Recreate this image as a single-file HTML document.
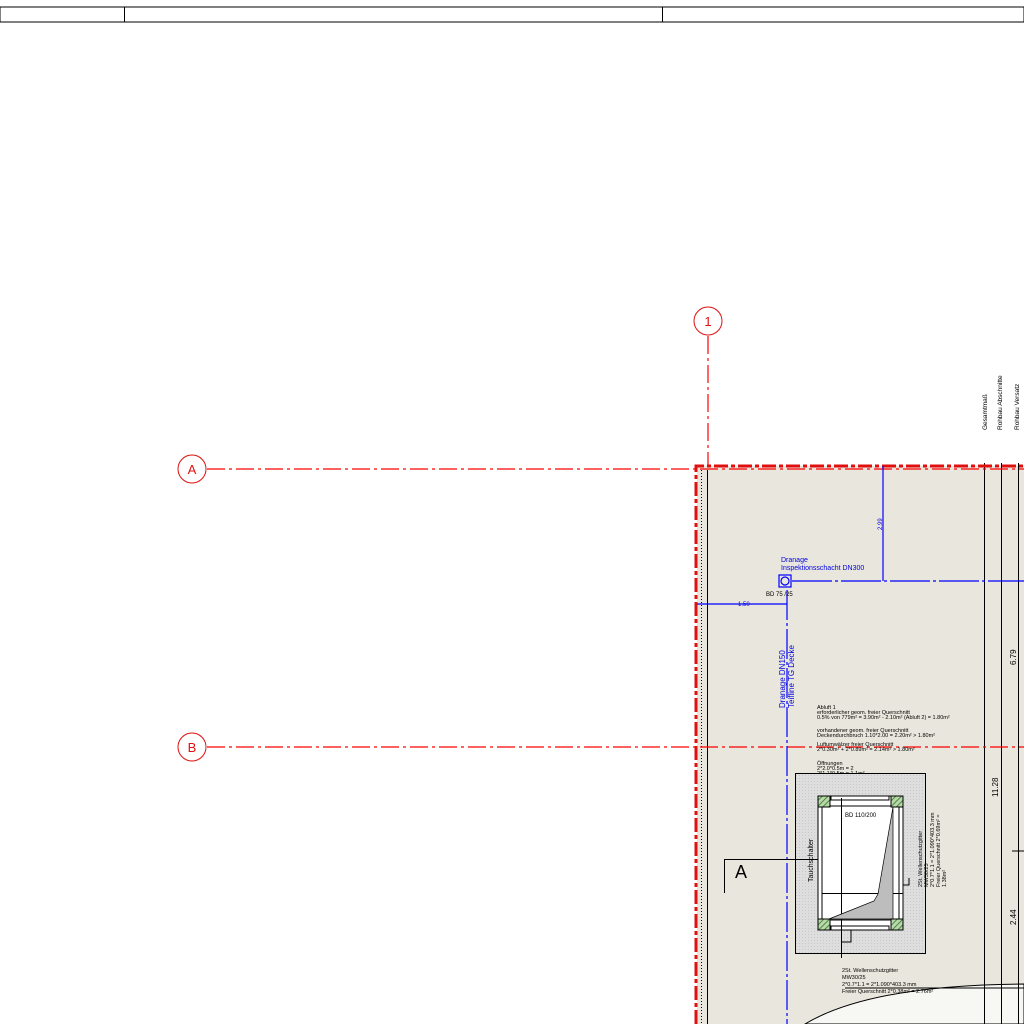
<!DOCTYPE html>
<html><head><meta charset="utf-8"><style>
html,body{margin:0;padding:0;background:#fff;width:1024px;height:1024px;overflow:hidden}
svg{display:block}
text{font-family:"Liberation Sans",sans-serif}
.r{stroke:#ff0000;stroke-width:1.2;stroke-dasharray:18,4,3,4;fill:none}
.b{stroke:#0000ff;stroke-width:1.2;fill:none}
</style></head><body>
<svg width="1024" height="1024" viewBox="0 0 1024 1024" xmlns="http://www.w3.org/2000/svg">
<defs>
<pattern id="h" width="4" height="4" patternUnits="userSpaceOnUse" patternTransform="rotate(45)">
<rect width="4" height="4" fill="#b8d8a8"/><line x1="0" y1="0" x2="0" y2="4" stroke="#2a6a2a" stroke-width="1.5"/></pattern>
<pattern id="g" width="3" height="3" patternUnits="userSpaceOnUse"><rect width="3" height="3" fill="#dedede"/><rect x="1" y="1" width="1" height="1" fill="#c8c8c8"/></pattern>
</defs>
<rect x="0" y="7" width="1024" height="15" fill="#fff" stroke="#000" stroke-width="1"/>
<line x1="124.5" y1="7" x2="124.5" y2="22" stroke="#000"/>
<line x1="662.5" y1="7" x2="662.5" y2="22" stroke="#000"/>
<rect x="697" y="466" width="327" height="558" fill="#e9e7dd"/>
<path d="M805 1024 Q870 985 1024 984 L1024 1024 Z" fill="#f7f7f4" stroke="#000" stroke-width="1"/>
<g stroke="#000" stroke-width="1">
<line x1="984.5" y1="463" x2="984.5" y2="1024"/>
<line x1="1001.5" y1="463" x2="1001.5" y2="1024"/>
<line x1="1018.5" y1="463" x2="1018.5" y2="1024"/>
<line x1="1012" y1="851" x2="1024" y2="851"/>
<line x1="845" y1="988" x2="1024" y2="988"/>
<line x1="707.5" y1="470" x2="707.5" y2="1024"/>
</g>
<line x1="701.5" y1="470" x2="701.5" y2="1024" stroke="#000" stroke-dasharray="1,2"/>
<path d="M696 1024 V466 H1024" fill="none" stroke="#e01010" stroke-width="3" stroke-dasharray="14,3,4,3"/>
<line class="r" x1="207" y1="469" x2="1024" y2="469"/>
<line class="r" x1="207" y1="747" x2="1024" y2="747"/>
<line class="r" x1="708" y1="336" x2="708" y2="466"/>
<g stroke="#e01010" fill="#fff">
<circle cx="192" cy="469" r="14"/><circle cx="192" cy="747" r="14"/><circle cx="708" cy="321" r="14"/>
</g>
<g fill="#e01010" font-size="13" text-anchor="middle">
<text x="192" y="474">A</text><text x="192" y="752">B</text><text x="708" y="326">1</text>
</g>
<line class="b" x1="787" y1="590" x2="787" y2="1024" stroke-dasharray="30,3,3,3"/>
<line class="b" x1="792" y1="581" x2="1024" y2="581" stroke-dasharray="40,3,3,3"/>
<line class="b" x1="883" y1="466" x2="883" y2="581"/>
<line class="b" x1="697" y1="604" x2="787" y2="604"/>
<rect class="b" x="779" y="575" width="12" height="12"/>
<circle class="b" cx="785" cy="581" r="4"/>
<g fill="#0000e0" font-size="7">
<text x="781" y="562">Dranage</text>
<text x="781" y="570">Inspektionsschacht DN300</text>
<text x="738" y="606" font-size="6">1.50</text>
<text transform="translate(882,530) rotate(-90)" font-size="6">2.99</text>
<text transform="translate(785,708) rotate(-90)" font-size="8">Dranage DN150</text>
<text transform="translate(794,708) rotate(-90)" font-size="8">Teifline TG Decke</text>
</g>
<text x="766" y="596" font-size="6">BD 75 /25</text>
<g font-size="5.5" fill="#000">
<text x="817" y="709">Abluft 1</text>
<text x="817" y="714">erforderlicher geom. freier Querschnitt</text>
<text x="817" y="719">0.5% von 779m² = 3.90m² - 2.10m² (Abluft 2) = 1.80m²</text>
<text x="817" y="732">vorhandener geom. freier Querschnitt</text>
<text x="817" y="737">Deckendurchbruch 1.10*2.00 = 2.20m² &gt; 1.80m²</text>
<text x="817" y="746">Luftumwälzer freier Querschnitt</text>
<text x="817" y="751">2*0.30m² + 2*0.89m² = 2.14m² &gt; 1.80m²</text>
<text x="817" y="765">Öffnungen</text>
<text x="817" y="770">2*2.0*0.5m = 2</text>
<text x="817" y="775">2*1.1*0.5m = 1.1m²</text>
<text x="842" y="972">2St. Wellenschutzgitter</text>
<text x="842" y="979">MW30/25</text>
<text x="842" y="986">2*0.7*1.1 = 2*1.090*403.3 mm</text>
<text x="842" y="993">Freier Querschnitt 2*0.38m² = 2.76m²</text>
</g>
<text transform="translate(987,430) rotate(-90)" font-size="6.5">Gesamtmaß</text>
<text transform="translate(1002,430) rotate(-90)" font-size="6.5">Rohbau Abschnitte</text>
<text transform="translate(1019,430) rotate(-90)" font-size="6.5">Rohbau Versatz</text>
<text transform="translate(1016,665) rotate(-90)" font-size="8">6.79</text>
<text transform="translate(998,797) rotate(-90)" font-size="8">11.28</text>
<text transform="translate(1016,925) rotate(-90)" font-size="8">2.44</text>
<rect x="795.5" y="773.5" width="130" height="180" fill="url(#g)" stroke="#000"/>
<rect x="818" y="796" width="85" height="134" fill="#fff" stroke="#000"/>
<g stroke="#000" fill="none">
<rect x="822" y="806" width="77" height="114"/>
<line x1="841.5" y1="798" x2="841.5" y2="958"/>
<line x1="822" y1="893.5" x2="903" y2="893.5"/>
<rect x="831" y="796" width="58" height="4"/>
<rect x="831" y="926" width="58" height="4"/>
</g>
<path d="M893 807 L878 894 L874 901 L829 919 L893 919 Z" fill="#bdbdbd" stroke="#000" stroke-width="0.7"/>
<rect x="818" y="796" width="12" height="11" fill="url(#h)" stroke="#000"/>
<rect x="891" y="796" width="12" height="11" fill="url(#h)" stroke="#000"/>
<rect x="818" y="919" width="12" height="11" fill="url(#h)" stroke="#000"/>
<rect x="891" y="919" width="12" height="11" fill="url(#h)" stroke="#000"/>
<g stroke="#000" fill="none">
<path d="M841 942 H851 V930"/>
<path d="M903 885 H909 V878"/>
<path d="M724.5 893 V859.5 H818"/>
</g>
<text x="735" y="878" font-size="18">A</text>
<text x="845" y="817" font-size="6">BD 110/200</text>
<text transform="translate(813,882) rotate(-90)" font-size="7">Tauchschalter</text>
<g font-size="5.5">
<text transform="translate(922,887) rotate(-90)">2St. Wellenschutzgitter</text>
<text transform="translate(928,887) rotate(-90)">MW30/25</text>
<text transform="translate(934,887) rotate(-90)">2*0.7*1.1 = 2*1.090*403.3 mm</text>
<text transform="translate(940,887) rotate(-90)">Freier Querschnitt 2*0.69m² =</text>
<text transform="translate(946,887) rotate(-90)">1.38m²</text>
</g>
</svg>
</body></html>
